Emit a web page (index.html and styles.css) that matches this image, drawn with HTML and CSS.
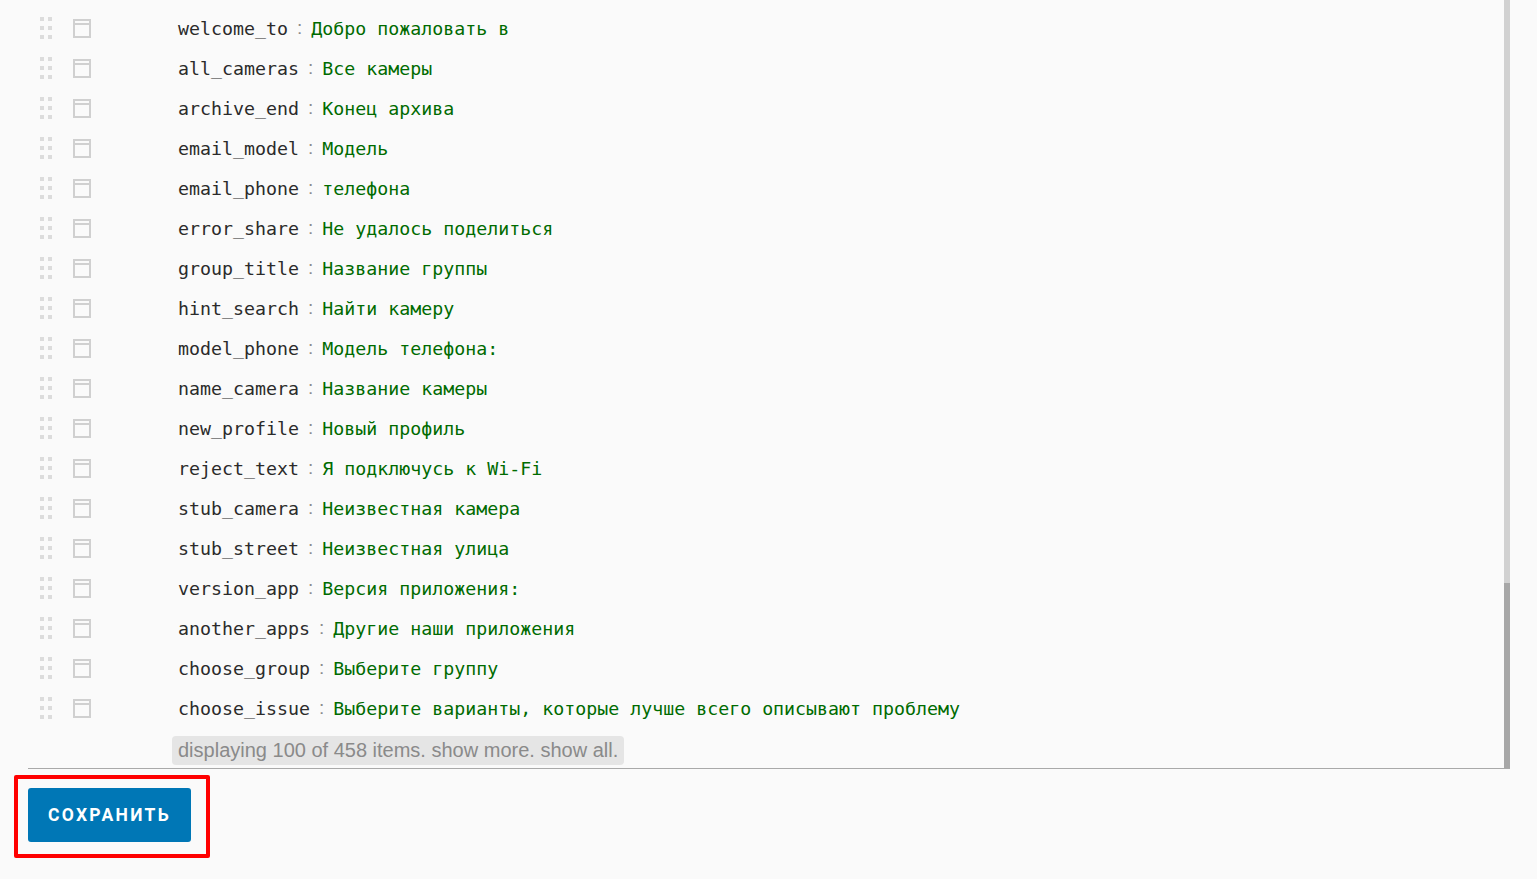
FILE: index.html
```html
<!DOCTYPE html>
<html lang="ru">
<head>
    <meta charset="UTF-8">
    <meta name="viewport" content="width=device-width, initial-scale=1.0">
    <title>Строки перевода</title>
    <link rel="stylesheet" href="styles.css">
</head>
<body>
    <div class="editor">
        <div class="list-wrap">
            <div class="list">
                <div class="rows" id="rows">
                    <!-- row above the visible part, only its handle peeks in -->
                    <div class="row">
                        <span class="handle"><i></i><i></i><i></i><i></i><i></i><i></i></span>
                    </div>
                </div>
                <div class="more">
                    <span class="more-text">displaying 100 of 458 items. show more. show all.</span>
                </div>
            </div>
            <div class="scrollbar">
                <div class="scroll-thumb"></div>
            </div>
        </div>
        <div class="actions">
            <div class="highlight">
                <button type="button" class="btn-save">Сохранить</button>
            </div>
        </div>
    </div>
    <script>
        const strings = [
            ['welcome_to', 'Добро пожаловать в'],
            ['all_cameras', 'Все камеры'],
            ['archive_end', 'Конец архива'],
            ['email_model', 'Модель'],
            ['email_phone', 'телефона'],
            ['error_share', 'Не удалось поделиться'],
            ['group_title', 'Название группы'],
            ['hint_search', 'Найти камеру'],
            ['model_phone', 'Модель телефона:'],
            ['name_camera', 'Название камеры'],
            ['new_profile', 'Новый профиль'],
            ['reject_text', 'Я подключусь к Wi-Fi'],
            ['stub_camera', 'Неизвестная камера'],
            ['stub_street', 'Неизвестная улица'],
            ['version_app', 'Версия приложения:'],
            ['another_apps', 'Другие наши приложения'],
            ['choose_group', 'Выберите группу'],
            ['choose_issue', 'Выберите варианты, которые лучше всего описывают проблему']
        ];

        const rows = document.getElementById('rows');
        strings.forEach(([key, value]) => {
            const row = document.createElement('div');
            row.className = 'row';
            row.innerHTML =
                '<span class="handle"><i></i><i></i><i></i><i></i><i></i><i></i></span>' +
                '<span class="toggle"></span>' +
                '<span class="key"></span><span class="sep">:</span><span class="value"></span>';
            row.querySelector('.key').textContent = key;
            row.querySelector('.value').textContent = value;
            rows.appendChild(row);
        });
    </script>
</body>
</html>
```

FILE: styles.css
```css
body {
    margin: 0;
    background-color: #fafafa;
    font-family: "Liberation Sans", Arial, sans-serif;
}

.editor {
    height: 879px;
    overflow: hidden;
}

.list-wrap {
    display: flex;
    margin-left: 28px;
    width: 1482px;
    height: 769px;
    border-bottom: 1px solid #a9a9a9;
    box-sizing: border-box;
}

.list {
    flex: 1;
    overflow: hidden;
}

/* list is scrolled: the first row is cut off at the top */
.rows {
    margin-top: -32px;
}

.row {
    display: flex;
    align-items: center;
    height: 40px;
    padding-left: 12px;
}

.handle {
    display: grid;
    grid-template-columns: 4px 4px;
    grid-auto-rows: 4px;
    column-gap: 4px;
    row-gap: 5px;
    width: 12px;
}

.handle i {
    background-color: #dcdcdc;
}

.toggle {
    width: 14px;
    height: 15px;
    margin-left: 21px;
    border: 2px solid #d0d0d0;
    position: relative;
}

.toggle::after {
    content: "";
    position: absolute;
    left: 0;
    right: 0;
    top: 2px;
    height: 2px;
    background-color: #d0d0d0;
}

.key,
.value {
    font-family: "DejaVu Sans Mono", "Liberation Mono", monospace;
    font-size: 18.27px;
    white-space: pre;
}

.key {
    margin-left: 87px;
    color: #2b2b2b;
}

.sep {
    margin: 0 9px 0 9px;
    color: #8c8c8c;
    font-size: 19px;
}

.value {
    color: #006b00;
}

.more {
    padding: 8px 0 0 144px;
}

.more-text {
    display: inline-block;
    padding: 2px 6px;
    border-radius: 4px;
    background-color: #e5e5e5;
    color: #8a8a8a;
    font-size: 20px;
    line-height: 25px;
}

.scrollbar {
    width: 6px;
    background-color: #d1d1d1;
    display: flex;
    flex-direction: column;
    justify-content: flex-end;
}

.scroll-thumb {
    height: 185px;
    background-color: #a7a7a7;
}

.actions {
    padding: 6px 0 0 14px;
}

.highlight {
    display: inline-block;
    border: 4px solid #ff0000;
    border-radius: 2px;
    padding: 9px 15px 12px 10px;
}

.btn-save {
    display: block;
    width: 163px;
    height: 54px;
    border: none;
    border-radius: 3px;
    background-color: #0077b6;
    color: #ffffff;
    font-family: Roboto, "Liberation Sans", sans-serif;
    font-weight: bold;
    font-size: 17.5px;
    letter-spacing: 2.3px;
    text-transform: uppercase;
    cursor: pointer;
}
```
